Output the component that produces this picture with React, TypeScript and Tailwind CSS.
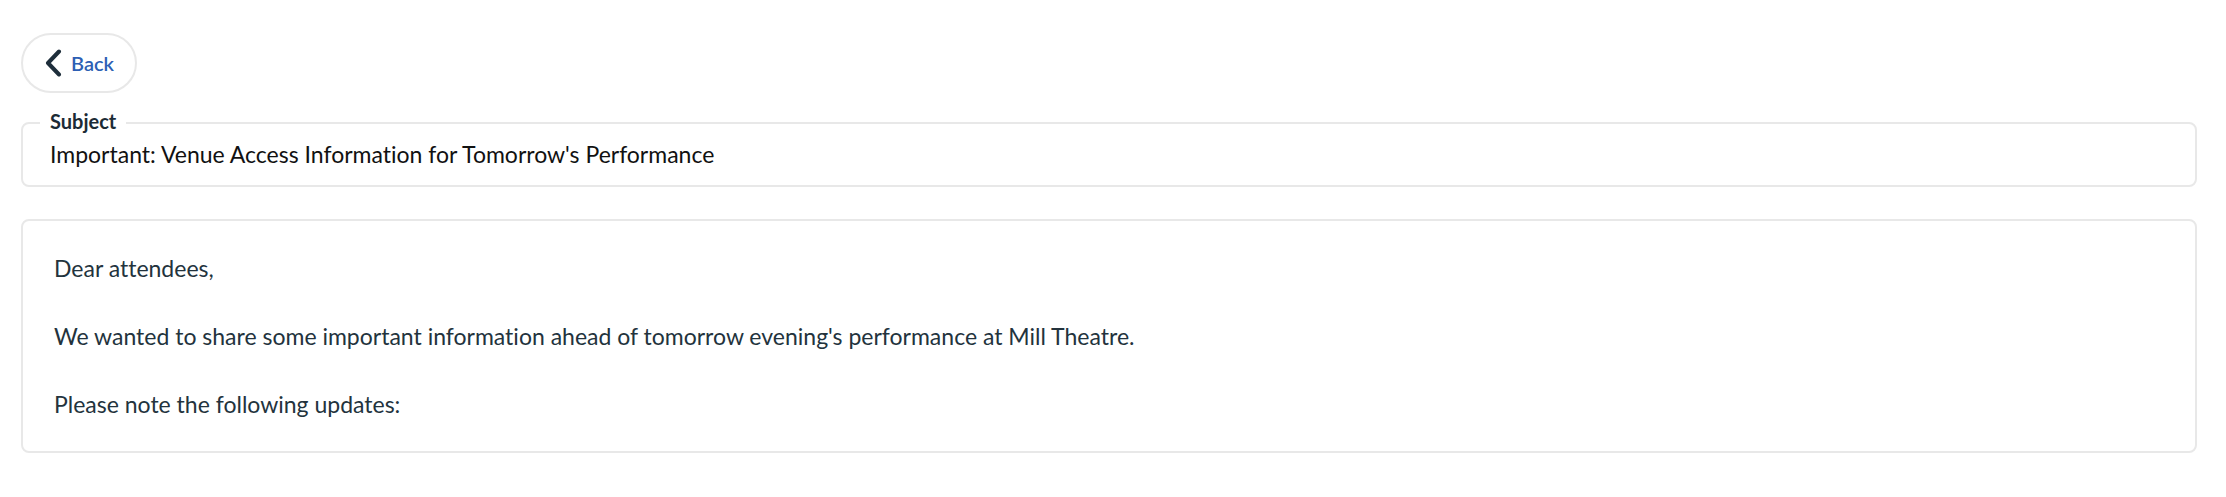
export default function App() {
  return (
    <div className="min-h-screen bg-white pl-[21px] pr-[29px] pt-[33px] font-['Lato',_sans-serif] [font-variant-ligatures:none]">
      <button
        type="button"
        className="flex h-[60px] w-[116px] items-center gap-[9px] rounded-full border-2 border-[#e8e8e8] bg-white pl-[21px]"
      >
        <svg width="18" height="28" viewBox="0 0 18 28" fill="none">
          <path
            d="M15 2.5 L4 14 L15 25.5"
            stroke="#1e2e3b"
            strokeWidth="4"
            strokeLinecap="round"
            strokeLinejoin="round"
          />
        </svg>
        <span className="text-[20px] font-semibold text-[#2d5fb4]">Back</span>
      </button>

      <div className="relative mt-[29px] flex h-[65px] items-center rounded-lg border-2 border-[#e8e8e8] pl-[27px]">
        <span className="absolute -top-[13px] left-[17px] bg-white px-[10px] text-[20px] font-bold leading-[20px] text-[#1c2b36]">
          Subject
        </span>
        <span className="text-[23px] text-[#111111]">
          Important: Venue Access Information for Tomorrow's Performance
        </span>
      </div>

      <div className="mt-[32px] rounded-lg border-2 border-[#e8e8e8] px-[31px] py-[30px] text-[23px] leading-[34px] text-[#23333d]">
        <p>Dear attendees,</p>
        <p>
          <br />
        </p>
        <p>
          We wanted to share some important information ahead of tomorrow
          evening's performance at Mill Theatre.
        </p>
        <p>
          <br />
        </p>
        <p>Please note the following updates:</p>
      </div>
    </div>
  );
}
